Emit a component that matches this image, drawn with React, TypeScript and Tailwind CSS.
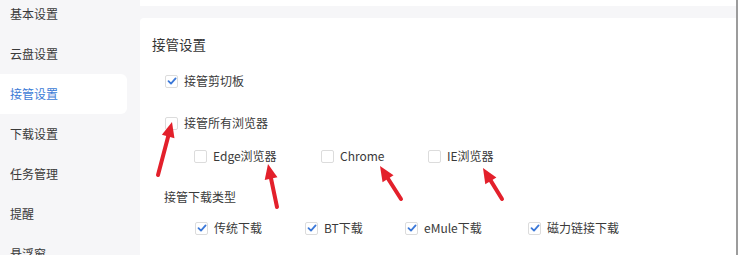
import React from 'react'

const font = { fontFamily: '"Noto Sans CJK SC", "Noto Sans", sans-serif' }

const navItems = ['基本设置', '云盘设置', '接管设置', '下载设置', '任务管理', '提醒', '悬浮窗']

function Checkbox({ checked }: { checked?: boolean }) {
  return (
    <span className="w-[13px] h-[13px] shrink-0 rounded-[2px] border border-[#dcdcdc] bg-white flex items-center justify-center">
      {checked && (
        <svg width="10" height="10" viewBox="0 0 10 10">
          <path d="M1.5 5.2 L4 7.6 L8.6 2.4" fill="none" stroke="#3b78d8" strokeWidth="1.8" strokeLinecap="round" strokeLinejoin="round" />
        </svg>
      )}
    </span>
  )
}

function Option({ label, checked, className = '' }: { label: string; checked?: boolean; className?: string }) {
  return (
    <div className={`flex items-center gap-[6px] ${className}`}>
      <Checkbox checked={checked} />
      <span className="text-[12px] text-[#3a3a3a] leading-none">{label}</span>
    </div>
  )
}

// red annotation arrow, tip/tail in page coordinates
function Arrow({ tip, tail }: { tip: [number, number]; tail: [number, number] }) {
  const [tx, ty] = tip
  const [bx, by] = tail
  const len = Math.hypot(tx - bx, ty - by)
  const ux = (tx - bx) / len
  const uy = (ty - by) / len
  const head = 15
  const half = 6.5
  const hx = tx - ux * head
  const hy = ty - uy * head
  const px = -uy
  const py = ux
  const pts = `${tx},${ty} ${hx + px * half},${hy + py * half} ${hx - px * half},${hy - py * half}`
  return (
    <g>
      <line x1={bx} y1={by} x2={hx + ux * 2} y2={hy + uy * 2} stroke="#e3202b" strokeWidth="4" strokeLinecap="round" />
      <polygon points={pts} fill="#e3202b" />
    </g>
  )
}

export default function App() {
  return (
    <div className="relative w-[738px] h-[255px] overflow-hidden flex bg-[#f6f6f8]" style={font}>
      {/* Sidebar */}
      <div className="w-[140px] shrink-0 pr-[13px]">
        <div className="flex flex-col mt-[-6px]">
          {navItems.map((item) => (
            <div
              key={item}
              className={`h-[40px] flex items-center pl-[10px] text-[12px] rounded-r-[6px] ${
                item === '接管设置' ? 'bg-white text-[#3b7bd6]' : 'text-[#3a3a3a]'
              }`}
            >
              {item}
            </div>
          ))}
        </div>
      </div>

      {/* Main */}
      <div className="flex-1 flex flex-col border-r-2 border-[#9c9c9c]">
        <div className="h-[6px] bg-white" />
        <div className="h-[12px]" />
        <div className="flex-1 bg-white rounded-tl-[4px] pl-[12px]">
          <div className="h-[54px] flex items-center">
            <span className="text-[13.5px] text-[#333] leading-none">接管设置</span>
          </div>
          <div className="pl-[13px]">
            <Option label="接管剪切板" checked className="h-[18px]" />
            <Option label="接管所有浏览器" className="h-[18px] mt-[24px]" />
            <div className="flex pl-[29px] mt-[15px] h-[18px]">
              <Option label="Edge浏览器" className="w-[127px]" />
              <Option label="Chrome" className="w-[107px]" />
              <Option label="IE浏览器" />
            </div>
            <div className="h-[18px] mt-[23px] flex items-center -ml-[1px]">
              <span className="text-[12px] text-[#3a3a3a] leading-none">接管下载类型</span>
            </div>
            <div className="flex pl-[30px] mt-[13px] h-[18px]">
              <Option label="传统下载" checked className="w-[110px]" />
              <Option label="BT下载" checked className="w-[100px]" />
              <Option label="eMule下载" checked className="w-[123px]" />
              <Option label="磁力链接下载" checked />
            </div>
          </div>
        </div>
      </div>

      {/* annotations */}
      <svg className="absolute inset-0 pointer-events-none" width="738" height="255">
        <Arrow tip={[172, 122]} tail={[158, 175]} />
        <Arrow tip={[268, 164]} tail={[277, 207]} />
        <Arrow tip={[380, 166]} tail={[401, 199]} />
        <Arrow tip={[483, 168]} tail={[502, 199]} />
      </svg>
    </div>
  )
}
